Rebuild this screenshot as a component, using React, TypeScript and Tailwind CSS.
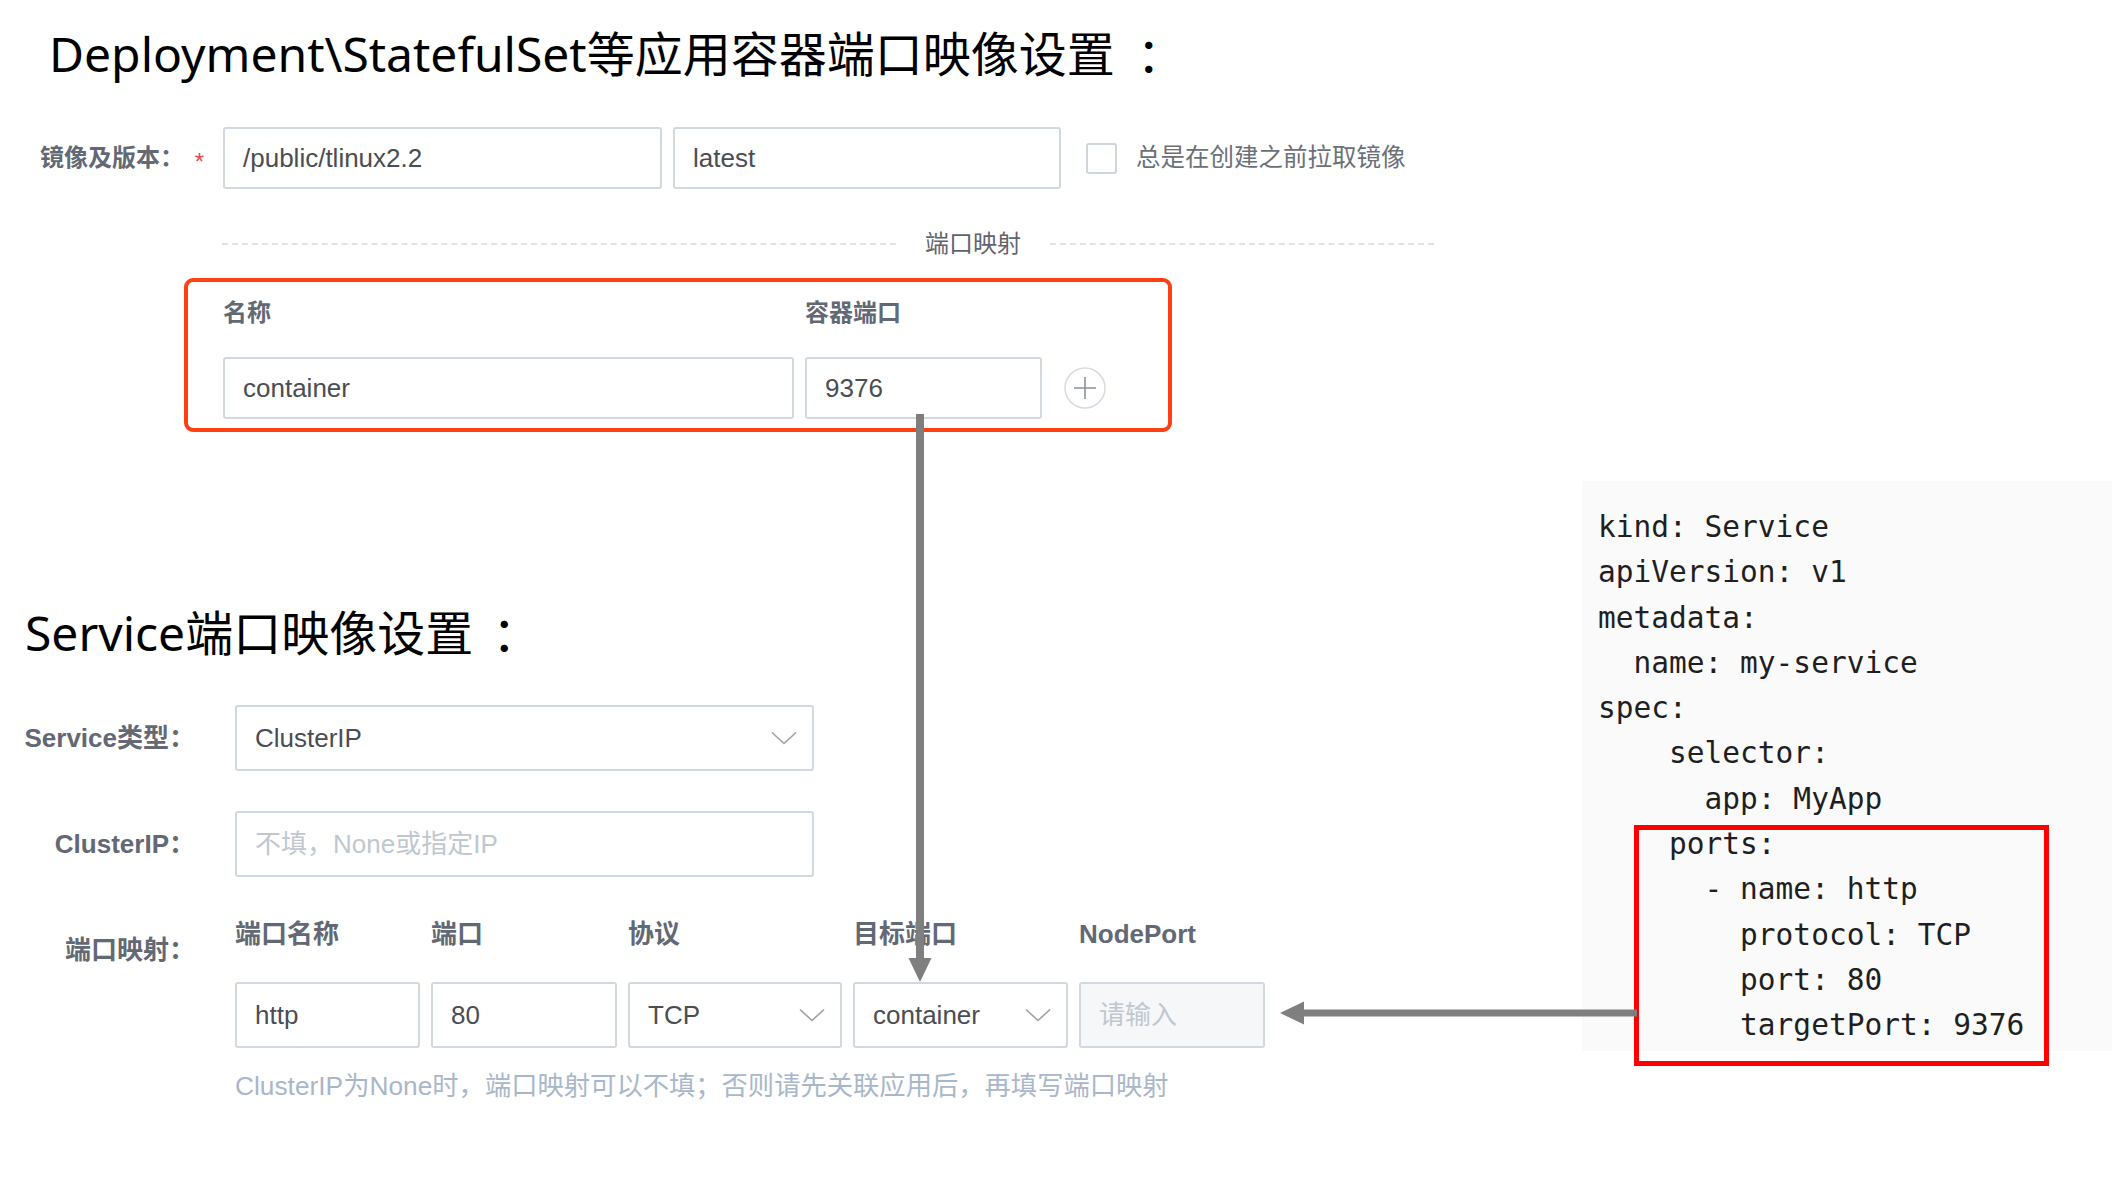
import clsx from "clsx";

const sans = "font-['Liberation_Sans','Noto_Sans_CJK_SC',sans-serif]";
const label = "text-[24px] font-bold text-[#626874]";
const label2 = "text-[26px] font-bold text-[#626874]";

function Chevron() {
  return (
    <svg width="26" height="14" viewBox="0 0 26 14" fill="none">
      <path d="M1 1.5 L13 12.5 L25 1.5" stroke="#9ba1a9" strokeWidth="1.6" />
    </svg>
  );
}

function Input({
  className,
  children,
  placeholder,
  disabled,
}: {
  className?: string;
  children?: React.ReactNode;
  placeholder?: string;
  disabled?: boolean;
}) {
  return (
    <div
      className={clsx(
        "flex shrink-0 items-center rounded-[3px] border-2 border-[#d2d8e0] px-[18px] text-[26px]",
        disabled ? "bg-[#f6f7f9]" : "bg-white",
        className,
      )}
    >
      {children ? (
        <span className="text-[#4a4d52]">{children}</span>
      ) : (
        <span className="text-[#c0c7d1]">{placeholder}</span>
      )}
    </div>
  );
}

function Select({ className, children }: { className?: string; children: React.ReactNode }) {
  return (
    <div
      className={clsx(
        "flex shrink-0 items-center justify-between rounded-[3px] border-2 border-[#d2d8e0] bg-white pl-[18px] pr-[15px] text-[26px]",
        className,
      )}
    >
      <span className="text-[#4a4d52]">{children}</span>
      <Chevron />
    </div>
  );
}

const code = `kind: Service
apiVersion: v1
metadata:
  name: my-service
spec:
    selector:
      app: MyApp
    ports:
      - name: http
        protocol: TCP
        port: 80
        targetPort: 9376`;

export default function App() {
  return (
    <div className={clsx("relative flex h-[1188px] w-[2127px] items-start overflow-hidden bg-white", sans)}>
      {/* Left: forms */}
      <div className="w-[1582px] shrink-0">
        <h1 className="pl-[49px] pt-[22px] font-['Noto_Sans','Noto_Sans_CJK_SC',sans-serif] text-[48px] font-normal leading-[64px] text-black">
          Deployment\StatefulSet等应用容器端口映像设置<span className="ml-[22px]">：</span>
        </h1>

        {/* Image + version */}
        <div className="mt-[41px] flex h-[62px] items-center">
          <div className="flex w-[223px] shrink-0 items-center pl-[40px]">
            <span className={label}>镜像及版本：</span>
            <span className="ml-auto mr-[19px] pt-[8px] text-[24px] text-[#e5484d]">*</span>
          </div>
          <Input className="h-[62px] w-[439px]">/public/tlinux2.2</Input>
          <Input className="ml-[11px] h-[62px] w-[388px]">latest</Input>
          <div className="ml-[25px] h-[31px] w-[31px] rounded-[3px] border-2 border-[#cfd5de] bg-white" />
          <span className="ml-[19px] text-[24.5px] text-[#6b7079]">总是在创建之前拉取镜像</span>
        </div>

        {/* Divider */}
        <div className="ml-[222px] mt-[40px] flex h-[30px] items-center">
          <div className="w-[674px] border-t-2 border-dashed border-[#dfe3e9]" />
          <span className="w-[154px] text-center text-[24px] text-[#5f646e]">端口映射</span>
          <div className="w-[384px] border-t-2 border-dashed border-[#dfe3e9]" />
        </div>

        {/* Container port mapping */}
        <div className="ml-[184px] mt-[19px] h-[154px] w-[988px] rounded-[9px] border-4 border-[#ff4013] pl-[35px] pt-[15px]">
          <div className={clsx("flex h-[32px] items-center", label)}>
            <span className="w-[582px]">名称</span>
            <span>容器端口</span>
          </div>
          <div className="mt-[28px] flex items-center">
            <Input className="h-[62px] w-[571px]">container</Input>
            <Input className="ml-[11px] h-[62px] w-[237px]">9376</Input>
            <svg className="ml-[22px]" width="42" height="42" viewBox="0 0 42 42" fill="none">
              <circle cx="21" cy="21" r="20" stroke="#d6dbe3" strokeWidth="1.5" fill="white" />
              <path d="M10 21 H32 M21 10 V32" stroke="#8c9199" strokeWidth="1.6" />
            </svg>
          </div>
        </div>

        <h2 className="mt-[169px] pl-[25px] font-['Noto_Sans','Noto_Sans_CJK_SC',sans-serif] text-[48px] font-normal leading-[64px] text-black">
          Service端口映像设置<span className="ml-[19px]">：</span>
        </h2>

        {/* Service type */}
        <div className="mt-[40px] flex items-center">
          <div className={clsx("w-[235px] shrink-0 pr-[40px] text-right", label2)}>Service类型：</div>
          <Select className="h-[66px] w-[579px]">ClusterIP</Select>
        </div>

        {/* ClusterIP */}
        <div className="mt-[40px] flex items-center">
          <div className={clsx("w-[235px] shrink-0 pr-[40px] text-right", label2)}>ClusterIP：</div>
          <Input className="h-[66px] w-[579px]" placeholder="不填，None或指定IP" />
        </div>

        {/* Service ports */}
        <div className="mt-[38px] flex">
          <div className={clsx("w-[235px] shrink-0 pr-[40px] pt-[19px] text-right leading-[32px]", label2)}>
            端口映射：
          </div>
          <div>
            <div
              className={clsx(
                "grid h-[32px] grid-cols-[185px_186px_214px_215px_186px] items-center gap-x-[11px]",
                label2,
              )}
            >
              <span>端口名称</span>
              <span>端口</span>
              <span>协议</span>
              <span>目标端口</span>
              <span>NodePort</span>
            </div>
            <div className="mt-[35px] grid grid-cols-[185px_186px_214px_215px_186px] gap-x-[11px]">
              <Input className="h-[66px] w-full">http</Input>
              <Input className="h-[66px] w-full">80</Input>
              <Select className="h-[66px] w-full">TCP</Select>
              <Select className="h-[66px] w-full">container</Select>
              <Input className="h-[66px] w-full" placeholder="请输入" disabled />
            </div>
          </div>
        </div>
        <p className="ml-[235px] mt-[22px] text-[26.3px] leading-[32px] text-[#a9b7ca]">
          ClusterIP为None时，端口映射可以不填；否则请先关联应用后，再填写端口映射
        </p>
      </div>

      {/* Right: yaml */}
      <div className="relative mt-[481px] h-[570px] w-[530px] shrink-0 bg-[#fafafa] pl-[16px] pt-[24px]">
        <pre className="font-['DejaVu_Sans_Mono',monospace] text-[29.5px] leading-[45.3px] text-[#1f1f1f]">{code}</pre>
        <div className="absolute left-[52px] top-[344px] h-[241px] w-[415px] border-[5px] border-[#ff0000]" />
      </div>

      {/* Arrows */}
      <svg className="pointer-events-none absolute inset-0" width="2127" height="1188">
        <line x1="920" y1="414" x2="920" y2="960" stroke="#7f7f7f" strokeWidth="8" />
        <polygon points="908.5,958 931.5,958 920,982" fill="#7f7f7f" />
        <line x1="1637" y1="1013" x2="1300" y2="1013" stroke="#7f7f7f" strokeWidth="7" />
        <polygon points="1304,1001.5 1304,1024.5 1280,1013" fill="#7f7f7f" />
      </svg>
    </div>
  );
}
